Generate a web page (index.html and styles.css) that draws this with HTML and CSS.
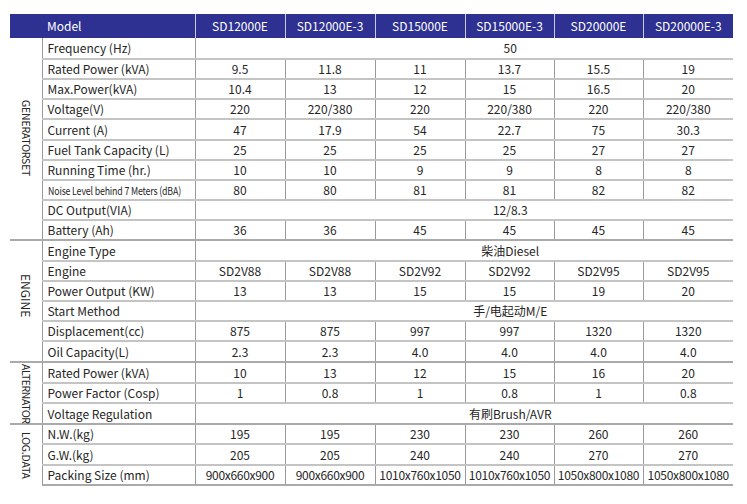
FILE: index.html
```html
<!DOCTYPE html>
<html>
<head>
<meta charset="utf-8">
<link rel="stylesheet" href="styles.css">
</head>
<body>
<table class="spec">
<colgroup>
<col class="c-cat"><col class="c-label">
<col class="c-d"><col class="c-d"><col class="c-d"><col class="c-d2"><col class="c-d2"><col class="c-d">
</colgroup>
<thead>
<tr class="head">
<th class="h-cat"></th><th class="h-label">Model</th>
<th>SD12000E</th><th>SD12000E-3</th><th>SD15000E</th><th>SD15000E-3</th><th>SD20000E</th><th>SD20000E-3</th>
</tr>
</thead>
<tbody>
<tr class="grp-first"><td class="cat" rowspan="10"><span class="vt vt-gen">GENERATORSET</span></td><td class="lbl">Frequency (Hz)</td><td class="span" colspan="6">50</td></tr>
<tr><td class="lbl">Rated Power (kVA)</td><td>9.5</td><td>11.8</td><td>11</td><td>13.7</td><td>15.5</td><td>19</td></tr>
<tr><td class="lbl">Max.Power(kVA)</td><td>10.4</td><td>13</td><td>12</td><td>15</td><td>16.5</td><td>20</td></tr>
<tr><td class="lbl">Voltage(V)</td><td>220</td><td>220/380</td><td>220</td><td>220/380</td><td>220</td><td>220/380</td></tr>
<tr class="t"><td class="lbl">Current (A)</td><td>47</td><td>17.9</td><td>54</td><td>22.7</td><td>75</td><td>30.3</td></tr>
<tr><td class="lbl">Fuel Tank Capacity (L)</td><td>25</td><td>25</td><td>25</td><td>25</td><td>27</td><td>27</td></tr>
<tr><td class="lbl">Running Time (hr.)</td><td>10</td><td>10</td><td>9</td><td>9</td><td>8</td><td>8</td></tr>
<tr><td class="lbl"><span class="cond">Noise Level behind 7 Meters (dBA)</span></td><td>80</td><td>80</td><td>81</td><td>81</td><td>82</td><td>82</td></tr>
<tr><td class="lbl">DC Output(VIA)</td><td class="span" colspan="6">12/8.3</td></tr>
<tr class="grp-end"><td class="lbl">Battery (Ah)</td><td>36</td><td>36</td><td>45</td><td>45</td><td>45</td><td>45</td></tr>

<tr class="t"><td class="cat" rowspan="6"><span class="vt vt-eng">ENGINE</span></td><td class="lbl">Engine Type</td><td class="span" colspan="6">柴油Diesel</td></tr>
<tr><td class="lbl">Engine</td><td>SD2V88</td><td>SD2V88</td><td>SD2V92</td><td>SD2V92</td><td>SD2V95</td><td>SD2V95</td></tr>
<tr><td class="lbl">Power Output (KW)</td><td>13</td><td>13</td><td>15</td><td>15</td><td>19</td><td>20</td></tr>
<tr><td class="lbl">Start Method</td><td class="span" colspan="6">手/电起动M/E</td></tr>
<tr><td class="lbl">Displacement(cc)</td><td>875</td><td>875</td><td>997</td><td>997</td><td>1320</td><td>1320</td></tr>
<tr class="grp-end t"><td class="lbl">Oil Capacity(L)</td><td>2.3</td><td>2.3</td><td>4.0</td><td>4.0</td><td>4.0</td><td>4.0</td></tr>

<tr class="t"><td class="cat" rowspan="3"><span class="vt vt-alt">ALTERNATOR</span></td><td class="lbl">Rated Power (kVA)</td><td>10</td><td>13</td><td>12</td><td>15</td><td>16</td><td>20</td></tr>
<tr><td class="lbl">Power Factor (Cosp)</td><td>1</td><td>0.8</td><td>1</td><td>0.8</td><td>1</td><td>0.8</td></tr>
<tr class="grp-end t"><td class="lbl">Voltage Regulation</td><td class="span" colspan="6">有刷Brush/AVR</td></tr>

<tr><td class="cat" rowspan="3"><span class="vt vt-log">LOG.DATA</span></td><td class="lbl">N.W.(kg)</td><td>195</td><td>195</td><td>230</td><td>230</td><td>260</td><td>260</td></tr>
<tr class="t"><td class="lbl">G.W.(kg)</td><td>205</td><td>205</td><td>240</td><td>240</td><td>270</td><td>270</td></tr>
<tr class="grp-end"><td class="lbl">Packing Size (mm)</td><td class="pk">900x660x900</td><td class="pk">900x660x900</td><td class="pk">1010x760x1050</td><td class="pk">1010x760x1050</td><td class="pk">1050x800x1080</td><td class="pk">1050x800x1080</td></tr>
</tbody>
</table>
</body>
</html>
```

FILE: styles.css
```css
html, body {
  margin: 0;
  padding: 0;
  background: #ffffff;
}
body {
  padding: 14px 0 0 10px;
  font-family: "Noto Sans CJK SC", "Noto Sans", sans-serif;
  color: #262626;
}
.spec {
  border-collapse: collapse;
  table-layout: fixed;
  width: 723px;
  font-size: 12px;
}
.c-cat { width: 32px; }
.c-label { width: 153px; }
.c-d { width: 90px; }
.c-d2 { width: 89px; }

.head th {
  background: #2e3192;
  color: #ffffff;
  font-weight: normal;
  height: 24px;
  padding: 0;
  text-align: center;
  border-left: 1px solid #c9cae6;
  line-height: 24px;
}
.head th.h-cat { border-left: none; }
.head th.h-label {
  border-left: none;
  text-align: left;
  padding-left: 5px;
}
.spec td {
  height: 18px;
  padding: 0;
  text-align: center;
  line-height: 16px;
  border-top: 2px solid #c4c4c4;
  border-left: 1px solid #9a9a9a;
  white-space: nowrap;
  overflow: hidden;
}
.spec tr.t td { height: 19px; }
.spec tr.grp-first td { border-top: none; height: 20px; }
.spec td.lbl {
  text-align: left;
  padding-left: 5px;
}
.spec td.span {
  padding-left: 92px;
}
.spec td.cat {
  border-left: none;
  border-right: 1px solid #9a9a9a;
  border-top: 2px solid #aaaaaa;
  vertical-align: middle;
  text-align: center;
  line-height: 0;
  overflow: visible;
}
.grp-end td { border-bottom: 2px solid #aaaaaa; }
.vt {
  writing-mode: vertical-rl;
  display: block;
  margin: 0 auto;
  line-height: 14px;
  text-align: center;
  overflow: visible;
  color: #262626;
}
.vt-gen {
  height: 150px;
  font-size: 10.5px;
  letter-spacing: -0.2px;
}
.vt-eng {
  height: 90px;
  font-size: 12px;
  margin-bottom: 10px;
}
.vt-alt {
  height: 58px;
  font-size: 10.5px;
  letter-spacing: -0.4px;
}
.vt-log {
  height: 50px;
  font-size: 10.5px;
  letter-spacing: -0.2px;
}
.cond {
  display: inline-block;
  font-size: 11px;
  transform: scaleX(0.8);
  transform-origin: left center;
  letter-spacing: -0.2px;
}
.spec td.pk {
  letter-spacing: -0.3px;
}
```
